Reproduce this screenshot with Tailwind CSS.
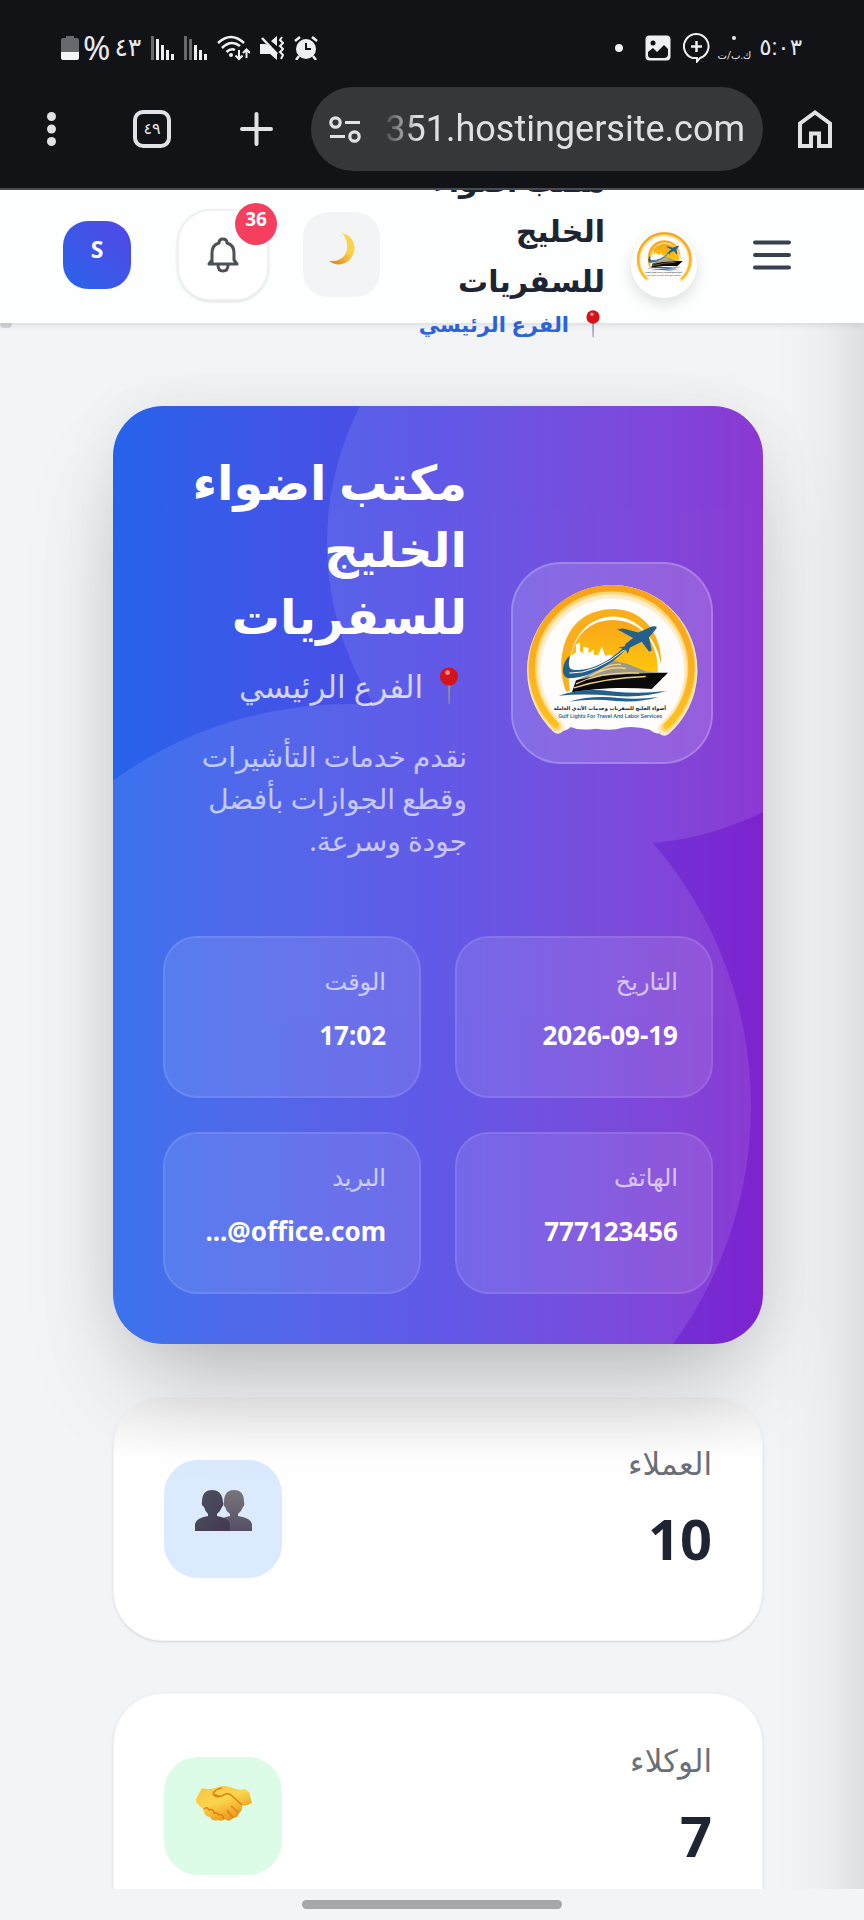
<!DOCTYPE html>
<html lang="ar" dir="rtl">
<head>
    <meta charset="UTF-8">
    <meta name="viewport" content="width=device-width, initial-scale=1.0">
    <title>مكتب اضواء الخليج للسفريات</title>
    <script src="https://cdn.jsdelivr.net/npm/@tailwindcss/browser@4"></script>
</head>
<body class="h-screen overflow-hidden flex flex-col bg-[#f3f4f6] font-['Noto_Sans','DejaVu_Sans',sans-serif]">

    <!-- Shared logo artwork -->
    <svg class="absolute w-0 h-0" aria-hidden="true">
        <defs>
            <linearGradient id="sun" x1="0" y1="0" x2="0" y2="1">
                <stop offset="0" stop-color="#f9a51a"/>
                <stop offset="1" stop-color="#fdc70c"/>
            </linearGradient>
            <linearGradient id="ring" x1="0" y1="0" x2="0" y2="1">
                <stop offset="0" stop-color="#f9a11b"/>
                <stop offset="0.6" stop-color="#fbb01f"/>
                <stop offset="1" stop-color="#fcc21d"/>
            </linearGradient>
        </defs>
        <symbol id="logo" viewBox="140 130 520 460">
            <path d="M230 566A240 240 0 1 1 560 572Q535 588 512 568Q470 556 430 562Q400 572 350 565Q300 572 275 560Q250 580 230 566Z" fill="#fefdfb"/>
            <path d="M168 470A249 249 0 1 1 638 470" fill="none" stroke="#7b8fb0" stroke-width="6"/>
            <path d="M236 560A236 236 0 1 1 556 566" fill="none" stroke="#fdeccb" stroke-width="40" stroke-linecap="round"/>
            <path d="M232 558A239 239 0 1 1 560 562" fill="none" stroke="#fcd873" stroke-width="28" stroke-linecap="round"/>
            <path d="M229 553A240 240 0 1 1 563 556" fill="none" stroke="url(#ring)" stroke-width="19" stroke-linecap="round"/>
            <path d="M262 455C225 370 246 205 405 205C500 207 550 290 546 372C535 300 480 228 400 228C300 232 255 330 272 450Z" fill="#f9ae1b"/>
            <path d="M275 350C290 270 345 238 402 238C490 240 540 310 536 395L440 390L370 360Z" fill="url(#sun)"/>
            <path d="M268 400L272 348L290 336V312L302 306V330L312 340V318L328 322V338L344 328V344L358 342L368 318L378 346L396 342L404 356L360 390L300 412Z" fill="#fff"/>
            <path d="M352 392C360 372 378 362 405 360L450 372L500 392L555 398L440 420L290 420Z" fill="#9c988b"/>
            <path d="M278 456L290 420C350 405 450 398 567 397L518 446C430 438 340 444 278 456Z" fill="#0a0a0a"/>
            <path d="M284 442Q380 412 500 408M290 430Q370 392 480 398M330 408Q390 374 440 384M350 398Q385 368 425 372" fill="none" stroke="#f3d27a" stroke-width="4"/>
            <path d="M272 346C246 366 244 412 268 413C330 414 400 370 440 326L434 320C390 366 320 398 276 386C266 380 268 362 272 346Z" fill="#24608c"/>
            <path d="M270 398Q350 400 436 328" fill="none" stroke="#fff" stroke-width="3"/>
            <path d="M414 266L432 264L478 276L518 258Q536 254 532 264L510 290L518 330L510 334L488 304L452 322L446 340L440 328L418 320L436 318L440 310L462 292Z" fill="#24608c"/>
            <path d="M238 466Q310 440 400 453Q480 462 562 452Q490 474 400 466Q310 458 238 466Z" fill="#24608c"/>
            <path d="M270 483Q340 464 420 473Q480 478 538 470Q480 488 410 482Q340 474 270 483Z" fill="#24608c"/>
            <text x="392" y="508" direction="rtl" text-anchor="middle" font-family="DejaVu Sans" font-weight="bold" font-size="15" fill="#111">أضواء الخليج للسفريات وخدمات الأيدي العاملة</text>
            <text x="393" y="533" direction="ltr" text-anchor="middle" font-family="Roboto" font-weight="500" font-size="17" fill="#24608c">Gulf Lights For Travel And Labor Services</text>
        </symbol>
        <symbol id="pin" viewBox="0 0 20 40">
            <path d="M9 18h2.400l-.6 20-.8 2-.6-2z" fill="#8b8f98"/>
            <circle cx="10" cy="10" r="9.500" fill="#d3141b"/>
            <circle cx="8.500" cy="6" r="2.500" fill="#f58a8a"/>
        </symbol>
    </svg>

    <!-- Browser chrome -->
    <div dir="ltr" class="relative z-30 shrink-0 bg-[#111317] text-[#e8e9ee] border-b-2 border-[#4b4c50] font-['Roboto','DejaVu_Sans',sans-serif]">
        <div class="h-20 pt-4 pl-[61px] pr-[62px] flex items-center justify-between">
            <div class="flex items-center gap-2.5">
                <div class="flex items-center gap-1">
                    <svg class="w-[18px] h-6" viewBox="0 0 18 24"><path d="M5 0h8v2h3q2 0 2 2v12H0V4q0-2 2-2h3z" fill="#68696c"/><path d="M0 16h18v6q0 2-2 2H2q-2 0-2-2z" fill="#f4f4f6"/></svg>
                    <span class="text-[33px] leading-8 font-['Noto_Sans']">%</span>
                    <span class="text-[25px] leading-8">٤٣</span>
                </div>
                <svg class="w-[23px] h-6" viewBox="0 0 23 24" stroke-width="3"><path d="M1.500 0v24" stroke="#68696c"/><path d="M6.500 3v21M11.500 9v15M16.500 14v10M21.500 18v6" stroke="#f0f0f2"/></svg>
                <svg class="w-[23px] h-6" viewBox="0 0 23 24" stroke-width="3"><path d="M1.500 0v24M6.500 3v21" stroke="#68696c"/><path d="M11.500 9v15M16.500 14v10M21.500 18v6" stroke="#f0f0f2"/></svg>
                <svg class="w-[33px] h-[26px]" viewBox="0 0 33 26" fill="none" stroke="#f0f0f2" stroke-width="2.500"><path d="M1 8Q14-4 27 8M5 13Q14 4 23 11M9.500 17Q14 13 18 15"/><circle cx="14" cy="20" r="2" fill="#f0f0f2" stroke="none"/><path d="M22 15v9M18.500 20.500l3.500 3.500 3.500-3.500M29.500 23v-8M26 18l3.500-3.500L33 18" stroke-width="2"/></svg>
                <svg class="w-6 h-6" viewBox="0 0 24 24" fill="none" stroke="#f0f0f2"><path d="M0 8h5l3 1 9 9v6l-7-6H0zM11 5l6-5v10z" fill="#f0f0f2" stroke="none"/><path d="M2 2l15 16" stroke-width="2.500"/><path d="M22 1l-2 3 3 3-3 3 3 3-3 3 3 3-2 4" stroke-width="2"/></svg>
                <svg class="w-6 h-6" viewBox="0 0 24 24"><circle cx="12" cy="13" r="10" fill="#f0f0f2"/><path d="M1 5l5-4M23 5l-5-4M5 20l-3 4M19 20l3 4" stroke="#f0f0f2" stroke-width="2.500"/><path d="M12 7v6h5" fill="none" stroke="#111317" stroke-width="2"/></svg>
            </div>
            <div class="flex items-center gap-2">
                <svg class="w-2 h-2 mr-3.5" viewBox="0 0 8 8"><circle cx="4" cy="4" r="4" fill="#f0f0f2"/></svg>
                <svg class="w-[26px] h-[26px] mr-1" viewBox="0 0 26 26"><rect x=".5" y=".5" width="25" height="25" rx="4" fill="#f0f0f2"/><path d="M3 17l5-4 4 4 7-7 4 4v5q0 4-4 4H6q-3 0-3-3z" fill="#111317"/><circle cx="8" cy="8" r="2.500" fill="#111317"/></svg>
                <svg class="w-[27px] h-[30px]" viewBox="0 0 27 30" fill="none" stroke="#f0f0f2" stroke-width="2"><path d="M9.500 25A12.300 12.300 0 1 1 17 25L14 28.500v-3.500z"/><path d="M13.500 8v11M8 13.500h11" stroke-width="2.500"/></svg>
                <div dir="rtl" class="flex flex-col items-center">
                    <span class="w-1 h-1 mt-1 mb-2 rounded-full bg-[#e8e9ee]"></span>
                    <span class="text-[10px] leading-4">ك.ب/ت</span>
                </div>
                <span class="text-[23px] leading-8">٥:٠٣</span>
            </div>
        </div>
        <div class="h-[108px] pb-2.5 pl-9 pr-8 flex items-center">
            <button type="button" aria-label="القائمة" class="w-[30px] flex justify-center">
                <svg class="w-[9px] h-[34px]" viewBox="0 0 9 34" fill="#e1e2e8"><circle cx="4.500" cy="4.500" r="4.500"/><circle cx="4.500" cy="17" r="4.500"/><circle cx="4.500" cy="29.500" r="4.500"/></svg>
            </button>
            <button type="button" aria-label="علامات التبويب" class="ml-[67px] w-[38px] h-[38px] rounded-[10px] border-4 border-[#e1e2e8] text-base leading-5">٤٩</button>
            <button type="button" aria-label="تبويب جديد" class="ml-[69px]">
                <svg class="w-[33px] h-[34px]" viewBox="0 0 33 34" stroke="#e1e2e8" stroke-width="4" stroke-linecap="round"><path d="M16.500 2v30M2 17h29"/></svg>
            </button>
            <div class="ml-[38px] flex-1 min-w-0 h-[84px] px-[18px] flex items-center gap-5 rounded-full bg-[#36373b]">
                <svg class="shrink-0 w-8 h-[27px]" viewBox="0 0 32 27" fill="none" stroke="#e1e2e8" stroke-width="3.200"><circle cx="6.500" cy="6.500" r="4.700"/><path d="M16 6.500h15M1 20.500h15"/><circle cx="25.500" cy="20.500" r="4.700"/></svg>
                <input type="text" aria-label="عنوان الموقع" value="351.hostingersite.com" class="flex-1 min-w-0 bg-transparent text-right text-[36px] leading-[48px] text-[#dfe0e6] outline-none mask-l-from-90% mask-l-to-100%">
            </div>
            <button type="button" aria-label="الصفحة الرئيسية" class="ml-[35px]">
                <svg class="w-[34px] h-[38px]" viewBox="0 0 34 38" fill="none" stroke="#e1e2e8" stroke-width="4"><path d="M2 36V13.500L17 2.500l15 11V36H21V23.500h-8V36z"/></svg>
            </button>
        </div>
    </div>

    <!-- Page -->
    <div class="relative flex-1 min-h-0 overflow-hidden">
        <header class="relative z-20 h-[133px] pb-1 pr-[73px] pl-[63px] flex items-center justify-between bg-[#fdfefe] shadow-[0_2px_6px_rgba(0,0,0,0.1)]">
            <div class="flex items-center">
                <button type="button" aria-label="فتح القائمة">
                    <svg class="w-[38px] h-[30px]" viewBox="0 0 38 30" stroke="#374151" stroke-width="4" stroke-linecap="round"><path d="M2 2.500h34M2 15h34M2 27.500h34"/></svg>
                </button>
                <div class="mr-[56px] w-[66px] h-[66px] mt-5 flex items-start justify-center rounded-full bg-white shadow-[0_6px_14px_rgba(0,0,0,0.12)]">
                    <svg class="w-[57px] h-[50px]"><use href="#logo"/></svg>
                </div>
                <div class="mr-[26px] mb-3 w-[186px]">
                    <h1 class="text-[30px] leading-[50px] font-bold text-[#1f2433]">مكتب اضواء الخليج للسفريات</h1>
                    <p class="flex items-center gap-4 pr-1 text-[21px] leading-[36px] font-bold whitespace-nowrap text-[#2b63d9]">
                        <svg class="shrink-0 w-4 h-7"><use href="#pin"/></svg>
                        الفرع الرئيسي
                    </p>
                </div>
            </div>
            <div class="flex items-center">
                <button type="button" aria-label="الوضع الليلي" class="w-[77px] h-[85px] pb-3 flex items-center justify-center rounded-[25px] bg-[#f3f4f6]">
                    <svg class="w-[26px] h-8" viewBox="0 0 26 32"><defs><linearGradient id="moon" x1="1" y1="0" x2="0" y2="1"><stop offset=".4" stop-color="#fbd34a"/><stop offset="1" stop-color="#df7616"/></linearGradient></defs><path d="M13 0C24 3 28 13 24 22C19 32 8 34 0 28C10 29 17 24 18 16C19 10 17 4 13 0Z" fill="url(#moon)"/></svg>
                </button>
                <button type="button" aria-label="الإشعارات" class="relative mr-[34px] w-[92px] h-[92px] flex items-center justify-center rounded-[34px] bg-white border-2 border-[#f0f1f3] shadow-sm">
                    <svg class="w-8 h-9" viewBox="0 0 32 36" fill="none" stroke="#4b5157" stroke-width="3" stroke-linejoin="round"><path d="M5 27V16Q5 8 12 6Q12 2 16 2T20 6Q27 8 27 16V23L30 27H2L5 23M11 28Q11 34 16 34T21 28"/></svg>
                    <span class="absolute -top-2 -right-2.5 w-[42px] h-[42px] rounded-full bg-[#f43f5e] text-white text-[19px] leading-8 font-bold">36</span>
                </button>
                <button type="button" class="mr-[46px] w-[68px] h-[68px] pb-3 rounded-[25px] bg-linear-to-tr from-[#2563eb] to-[#4f46e5] text-white text-[23px] leading-8 font-bold">S</button>
            </div>
        </header>
        <span class="absolute z-10 top-[130px] left-0 w-3 h-2 rounded-full bg-gray-300"></span>

        <!-- Closed drawer, only its shadow reaches the page -->
        <aside class="absolute z-10 top-[-100px] bottom-[-100px] left-full w-72 bg-white shadow-[0_0_80px_rgba(0,0,0,0.17)]"></aside>

        <main class="pt-[83px] pr-[101px] pl-[113px] flex flex-col gap-[52px]">
            <section class="relative rounded-[50px] shadow-[0_52px_104px_-25px_rgba(0,0,0,0.25),0_0_60px_rgba(0,0,0,0.06)]">
                <div class="absolute inset-0 overflow-hidden rounded-[50px] bg-linear-to-r from-[#2563eb] via-[#4f46e5] to-[#7e22ce]">
                    <div class="absolute inset-0 opacity-10">
                        <span class="absolute -top-[164px] -right-[166px] w-[602px] h-[602px] rounded-full bg-white"></span>
                        <span class="absolute -bottom-[164px] -left-[166px] w-[804px] h-[804px] rounded-full bg-white"></span>
                    </div>
                </div>
                <div class="relative p-[50px] text-white">
                    <div class="flex items-center gap-[44px]">
                        <div class="shrink-0 w-[202px] h-[202px] pb-1 flex items-center justify-center rounded-[50px] border-2 border-white/20 bg-white/15">
                            <svg class="w-[173px] h-[153px]"><use href="#logo"/></svg>
                        </div>
                        <div class="flex-1 min-w-0 -mt-2 pb-2">
                            <h2 class="text-[48px] leading-[67px] font-bold">مكتب اضواء الخليج للسفريات</h2>
                            <p class="mt-3 flex items-center gap-4 pr-2 text-[31px] leading-[50px] whitespace-nowrap text-white/75">
                                <svg class="shrink-0 w-5 h-[38px]"><use href="#pin"/></svg>
                                الفرع الرئيسي
                            </p>
                            <p class="mt-6 text-[28px] leading-[42px] text-white/65">نقدم خدمات التأشيرات<br>وقطع الجوازات بأفضل<br>جودة وسرعة.</p>
                        </div>
                    </div>
                    <dl class="mt-[67px] grid grid-cols-2 gap-[34px]">
                        <div class="h-[162px] px-[33px] pt-[22px] rounded-[34px] border-2 border-white/10 bg-white/10">
                            <dt class="text-[24px] leading-[42px] text-white/65">التاريخ</dt>
                            <dd class="mt-2 text-[26px] leading-[50px] font-bold">2026-09-19</dd>
                        </div>
                        <div class="h-[162px] px-[33px] pt-[22px] rounded-[34px] border-2 border-white/10 bg-white/10">
                            <dt class="text-[24px] leading-[42px] text-white/65">الوقت</dt>
                            <dd class="mt-2 text-[26px] leading-[50px] font-bold">17:02</dd>
                        </div>
                        <div class="h-[162px] px-[33px] pt-[22px] rounded-[34px] border-2 border-white/10 bg-white/10">
                            <dt class="text-[24px] leading-[42px] text-white/65">الهاتف</dt>
                            <dd class="mt-2 text-[26px] leading-[50px] font-bold">777123456</dd>
                        </div>
                        <div class="h-[162px] px-[33px] pt-[22px] rounded-[34px] border-2 border-white/10 bg-white/10">
                            <dt class="text-[24px] leading-[42px] text-white/65">البريد</dt>
                            <dd dir="ltr" class="mt-2 text-right text-[26px] leading-[50px] font-bold">...@office.com</dd>
                        </div>
                    </dl>
                </div>
            </section>

            <section class="h-[245px] shrink-0 p-[50px] flex items-center justify-between rounded-[50px] border border-[#f3f4f6] bg-linear-to-b from-[#ededee] to-white to-25% shadow-sm">
                <div class="mb-1">
                    <p class="text-[31px] leading-[34px] text-[#6b7078]">العملاء</p>
                    <p class="mt-3 mb-1 text-[56px] leading-[92px] font-bold text-[#1f2433]">10</p>
                </div>
                <div class="w-[118px] h-[118px] pb-4 flex items-center justify-center rounded-[34px] bg-[#dbeafe]">
                    <svg class="w-[57px] h-[42px]" viewBox="0 0 57 42"><defs><linearGradient id="man" x1="0" y1="0" x2="1" y2="1"><stop stop-color="#4a5360"/><stop offset="1" stop-color="#443850"/></linearGradient><linearGradient id="man2" x1="0" y1="0" x2="0" y2="1"><stop stop-color="#77757b"/><stop offset="1" stop-color="#564f66"/></linearGradient></defs><path d="M29 12Q29 0 39 0T49 12Q50 15 48 17Q46 22 43 24V26Q56 28 57 34V41H22V34Q24 28 35 26V24Q31 21 30 17Q28 15 29 12Z" fill="url(#man2)"/><path d="M7 12Q7 0 17 0T28 12Q29 15 27 17Q25 22 22 24V26Q34 28 35 34V41H0V34Q1 28 13 26V24Q10 21 9 17Q6 15 7 12Z" fill="url(#man)"/></svg>
                </div>
            </section>

            <section class="h-[245px] shrink-0 p-[50px] flex items-center justify-between rounded-[50px] border border-[#f3f4f6] bg-white shadow-sm">
                <div class="mb-1">
                    <p class="text-[31px] leading-[34px] text-[#6b7078]">الوكلاء</p>
                    <p class="mt-3 mb-1 text-[56px] leading-[92px] font-bold text-[#1f2433]">7</p>
                </div>
                <div class="w-[118px] h-[118px] pb-6 flex items-center justify-center rounded-[34px] bg-[#dcfce7]">
                    <svg class="w-[57px] h-9" viewBox="0 0 57 36"><defs><linearGradient id="hand" x1="0" y1="0" x2=".6" y2="1"><stop stop-color="#f8c343"/><stop offset=".5" stop-color="#fcd54c"/><stop offset="1" stop-color="#eb9416"/></linearGradient></defs><path d="M1 13L7 2Q13 4 20 2Q29-2 38 2Q46 5 50 3L54 6L57 17Q50 21 47 19Q48 25 44 27Q43 32 38 32Q34 37 30 33Q27 36 23 34Q17 36 15 31Q9 30 8 23Q4 20 1 16Z" fill="url(#hand)"/><path d="M20 8Q22 11 27 10Q32 6 36 9L47 19M27 10Q20 12 18 8Q20 3 27 2M36 20L44 27M32 24L38 32M9 23Q12 20 14 24Q18 22 19 27Q22 26 24 29Q28 28 29 33" fill="none" stroke="#dd8316" stroke-width="1.500"/></svg>
                </div>
            </section>
        </main>
    </div>

    <!-- Gesture bar -->
    <footer class="relative z-30 shrink-0 h-[31px] pt-[11px] flex justify-center bg-[#f3f4f6]">
        <span class="w-[260px] h-[9px] rounded-full bg-[#a5a7a9]"></span>
    </footer>
</body>
</html>
